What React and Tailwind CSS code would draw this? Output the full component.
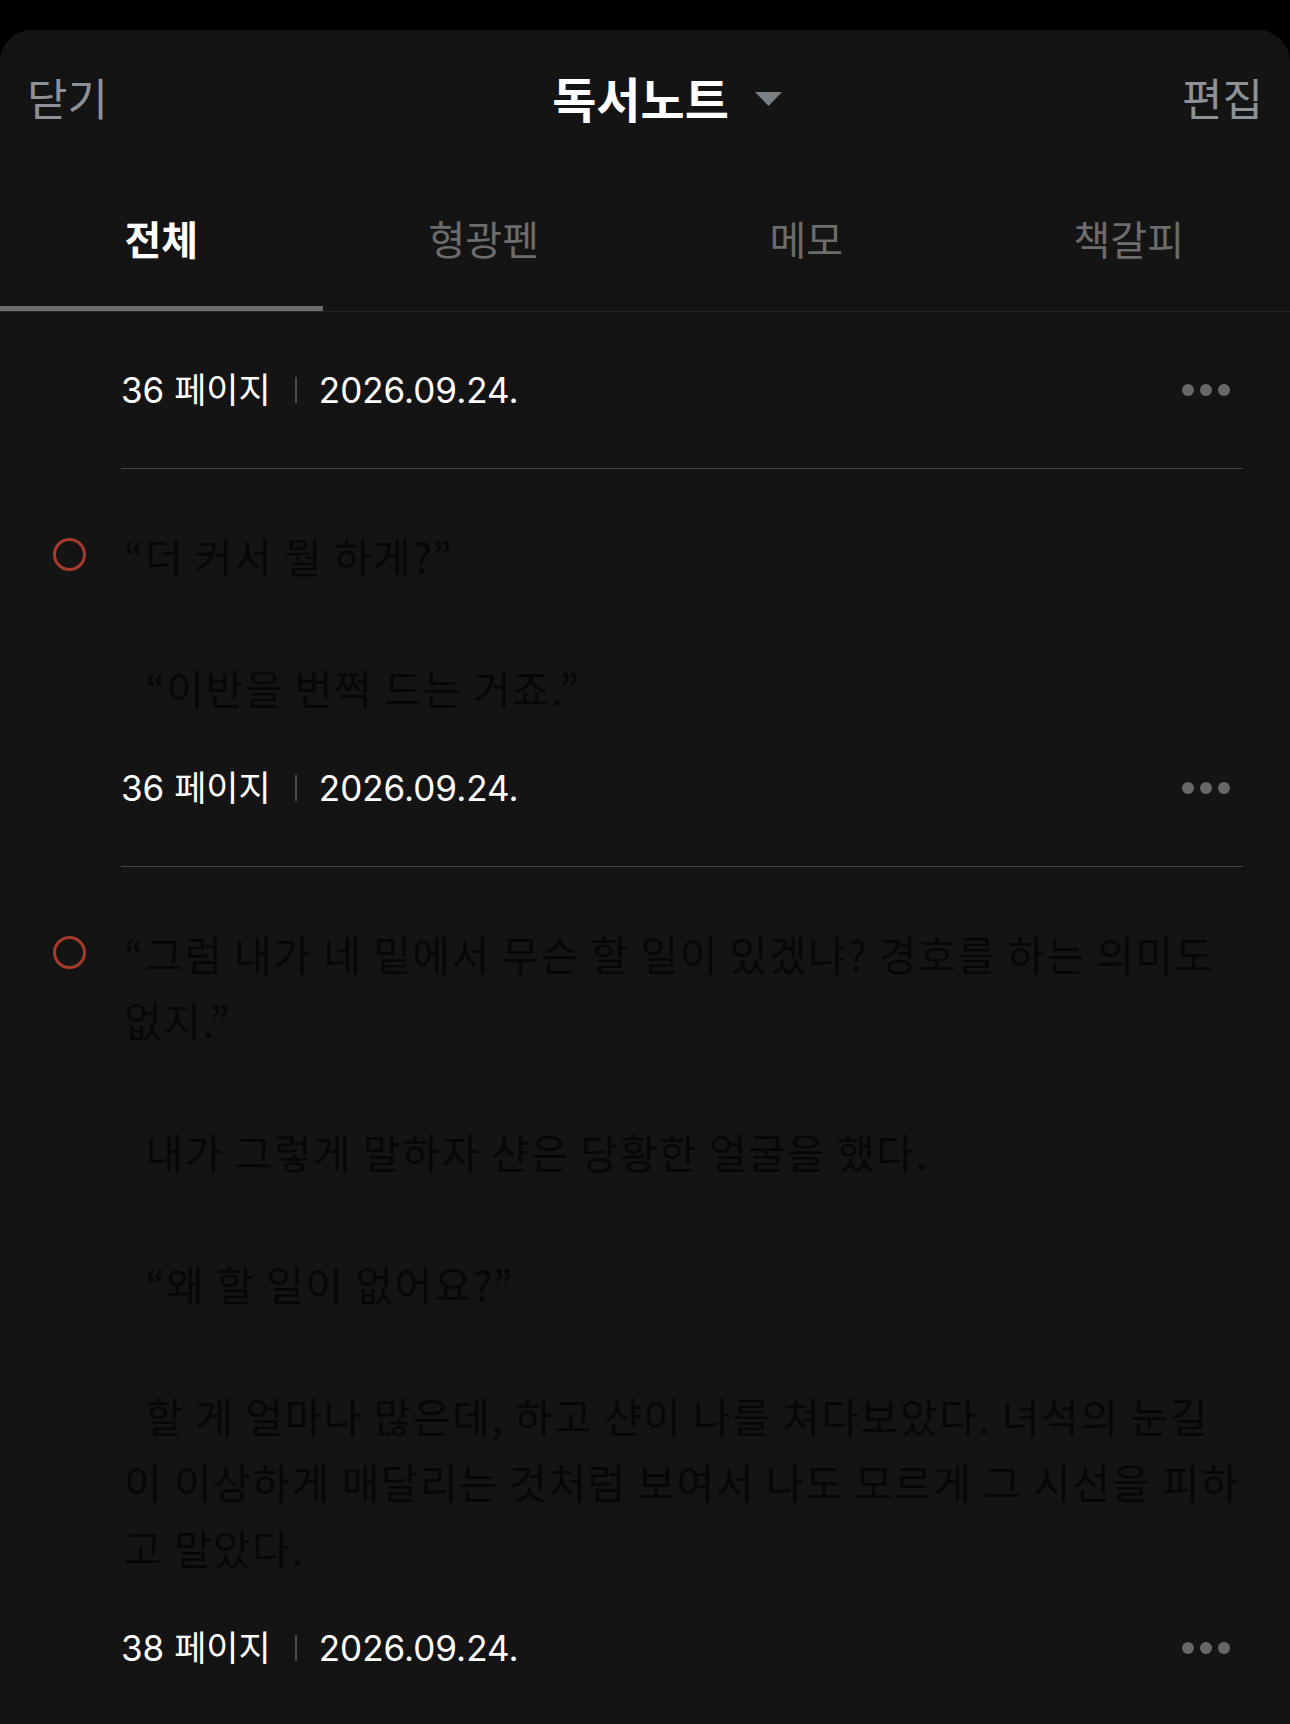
// App.jsx
const KR = { fontFamily: '"Noto Sans CJK KR", "Noto Sans", sans-serif' }
const META = { fontFamily: 'Inter, "Noto Sans CJK KR", sans-serif' }

const notes = [
  { page: 36, date: "2026.09.24.", text: null },
  {
    page: 36,
    date: "2026.09.24.",
    text: "“더 커서 뭘 하게?”\n\n  “이반을 번쩍 드는 거죠.”",
  },
  {
    page: 38,
    date: "2026.09.24.",
    text:
      "“그럼 내가 네 밑에서 무슨 할 일이 있겠냐? 경호를 하는 의미도 없지.”\n\n  내가 그렇게 말하자 샨은 당황한 얼굴을 했다.\n\n  “왜 할 일이 없어요?”\n\n  할 게 얼마나 많은데, 하고 샨이 나를 쳐다보았다. 녀석의 눈길이 이상하게 매달리는 것처럼 보여서 나도 모르게 그 시선을 피하고 말았다.",
  },
]

const tabs = ["전체", "형광펜", "메모", "책갈피"]

function MoreDots() {
  return (
    <div className="flex items-center gap-[6px]">
      <span className="block h-[12px] w-[12px] rounded-full bg-[#686868]" />
      <span className="block h-[12px] w-[12px] rounded-full bg-[#686868]" />
      <span className="block h-[12px] w-[12px] rounded-full bg-[#686868]" />
    </div>
  )
}

function NoteItem({ note, last }) {
  return (
    <div className="pl-[121px] pr-[47px]">
      <div className={last ? "pt-[53px] pb-[53px]" : "pt-[53px] pb-[53px] border-b border-[#454545]"}>
        {note.text && (
          <div className="relative mb-[43px]">
            <span className="absolute left-[-68px] top-[16px] block h-[33px] w-[33px] rounded-full border-[3px] border-[#a63b2b]" />
            <p
              className="whitespace-pre-wrap pl-[3px] text-[41px] leading-[66px] tracking-[1.5px] text-[#070707]"
              style={KR}
            >
              {note.text}
            </p>
          </div>
        )}
        <div className="flex h-[50px] items-center justify-between pr-[13px]">
          <div className="flex items-center text-[35px] text-white" style={META}>
            <span>{note.page} 페이지</span>
            <span className="ml-[24px] mr-[22px] block h-[26px] w-[2px] bg-[#4a4a4a]" />
            <span>{note.date}</span>
          </div>
          <MoreDots />
        </div>
      </div>
    </div>
  )
}

export default function App() {
  return (
    <div className="min-h-[1724px] w-[1290px] bg-black pt-[30px]">
      <div className="min-h-[1694px] overflow-hidden rounded-t-[32px] bg-[#141414]">
        {/* header */}
        <div className="flex h-[134px] items-center justify-between px-[27px]" style={KR}>
          <button type="button" className="text-[44px] text-[#8d9198]">
            닫기
          </button>
          <div className="flex items-center gap-[26px] pl-[44px]">
            <span className="text-[48px] font-bold text-white">독서노트</span>
            <svg width="27" height="14" viewBox="0 0 27 14" className="mt-[4px]">
              <path d="M0 0 H27 L13.5 14 Z" fill="#7b7f86" />
            </svg>
          </div>
          <button type="button" className="text-[44px] text-[#8d9198]">
            편집
          </button>
        </div>

        {/* tabs */}
        <div className="grid grid-cols-4 border-b border-[#262626]" style={KR}>
          {tabs.map((t, i) => (
            <div key={t} className="flex flex-col">
              <div
                className={
                  i === 0
                    ? "flex h-[142px] items-center justify-center pt-[6px] text-[40px] font-bold text-white"
                    : "flex h-[142px] items-center justify-center pt-[6px] text-[40px] text-[#6c6c6c]"
                }
              >
                {t}
              </div>
              <div className={i === 0 ? "h-[5px] bg-[#6e6e6e]" : "h-[5px]"} />
            </div>
          ))}
        </div>

        {/* list */}
        <div>
          {notes.map((n, i) => (
            <NoteItem key={i} note={n} last={i === notes.length - 1} />
          ))}
        </div>
      </div>
    </div>
  )
}
